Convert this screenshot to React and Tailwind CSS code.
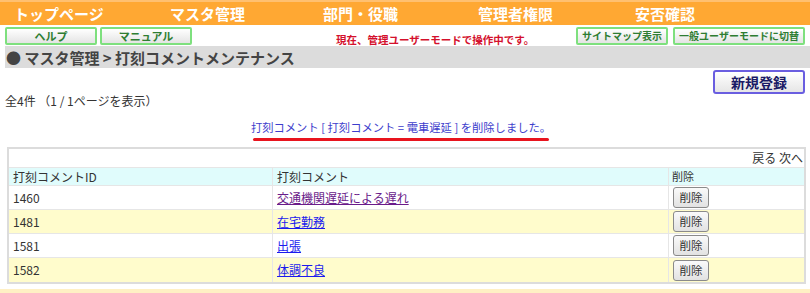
import React from "react";

const font = { fontFamily: '"Noto Sans CJK JP", "Noto Sans", sans-serif' };

function GreenBtn({ children, className = "" }) {
  return (
    <div
      className={`h-[18px] flex items-center justify-center whitespace-nowrap border-2 border-[#7ee07e] rounded-[2px] bg-gradient-to-b from-white to-[#e4e4e4] text-[#2e7d32] font-bold leading-none ${className}`}
    >
      {children}
    </div>
  );
}

const rows = [
  { id: "1460", name: "交通機関遅延による遅れ", visited: true },
  { id: "1481", name: "在宅勤務" },
  { id: "1581", name: "出張" },
  { id: "1582", name: "体調不良" },
];

export default function App() {
  return (
    <div className="w-[810px] h-[293px] bg-white overflow-hidden relative text-[#333]" style={font}>
      {/* top nav */}
      <div className="h-[25px] bg-[#ffa833] border-t-2 border-[#ffc070] flex items-center text-white font-bold text-[15px] leading-none">
        <div className="w-[170px] pl-[14px]">トップページ</div>
        <div className="w-[153px]">マスタ管理</div>
        <div className="w-[155px]">部門・役職</div>
        <div className="w-[157px]">管理者権限</div>
        <div>安否確認</div>
      </div>
      {/* second row */}
      <div className="h-[20px] mt-[1px] flex items-center px-[5px]">
        <GreenBtn className="w-[92px] text-[11px]">ヘルプ</GreenBtn>
        <GreenBtn className="w-[92px] ml-[3px] text-[11px]">マニュアル</GreenBtn>
        <div className="ml-[144px] mt-[9px] text-[#d4102c] font-bold text-[10.5px] leading-none">
          現在、管理ユーザーモードで操作中です。
        </div>
        <GreenBtn className="w-[92px] ml-auto text-[10px]">サイトマップ表示</GreenBtn>
        <GreenBtn className="w-[132px] ml-[5px] text-[10px]">一般ユーザーモードに切替</GreenBtn>
      </div>
      {/* breadcrumb */}
      <div className="ml-[5px] h-[22px] bg-[#dcdcdc] flex items-center pl-[1px] text-[15px] font-bold text-[#444] leading-none">
        ● マスタ管理 &gt; 打刻コメントメンテナンス
      </div>
      {/* new button */}
      <div className="flex justify-end pr-[5px] mt-[2px]">
        <div className="w-[92px] h-[24px] border-2 border-[#6a5ee0] rounded-[3px] bg-gradient-to-b from-white to-[#e6e6e6] flex items-center justify-center text-[#1a1a66] font-bold text-[14px] leading-none">
          新規登録
        </div>
      </div>
      <div className="pl-[5px] mt-[1px] text-[12px] leading-none">全4件 （1 / 1ページを表示）</div>
      {/* message */}
      <div className="flex justify-center mt-[15px] pr-[8px]">
        <div className="flex flex-col items-center">
          <div className="text-[#3d3dcc] text-[11.3px] leading-none">
            打刻コメント [ 打刻コメント = 電車遅延 ] を削除しました。
          </div>
          <div className="w-[296px] h-[3px] bg-[#e8141e] rounded-full mt-[5px]" />
        </div>
      </div>
      {/* table */}
      <div className="ml-[7px] mr-[4px] mt-[6px] border-2 border-[#dcdcdc] text-[12px] leading-none">
        <div className="h-[19px] bg-white flex items-center justify-end pr-[1px] border-b border-[#e6e6e6] text-[#333]">
          戻る 次へ
        </div>
        <div className="h-[18px] bg-[#e0fcfc] flex items-center border-b border-[#e6e6e6]">
          <div className="w-[264px] pl-[4px] h-full flex items-center border-r border-[#e6e6e6]">打刻コメントID</div>
          <div className="w-[396px] pl-[4px] h-full flex items-center border-r border-[#e6e6e6]">打刻コメント</div>
          <div className="pl-[3px] text-[11px]">削除</div>
        </div>
        {rows.map((r, i) => (
          <div
            key={r.id}
            className={`h-[24px] flex items-center ${i % 2 === 1 ? "bg-[#fffccc]" : "bg-white"} ${i < 3 ? "border-b border-[#e6e6e6]" : ""}`}
          >
            <div className="w-[264px] pl-[4px] h-full flex items-center border-r border-[#e6e6e6]">{r.id}</div>
            <div className="w-[396px] pl-[4px] h-full flex items-center border-r border-[#e6e6e6]">
              <span className={`underline ${r.visited ? "text-[#6a1b8a]" : "text-[#1a1aee]"}`}>{r.name}</span>
            </div>
            <div className="pl-[4px]">
              <div className="w-[36px] h-[21px] border border-[#8a8a8a] rounded-[3px] bg-gradient-to-b from-[#fafafa] to-[#e2e2e2] flex items-center justify-center text-[11.5px] text-[#333]">
                削除
              </div>
            </div>
          </div>
        ))}
      </div>
      <div className="absolute left-0 right-0 top-[289px] h-[4px] bg-[#fff0c4]" />
    </div>
  );
}
